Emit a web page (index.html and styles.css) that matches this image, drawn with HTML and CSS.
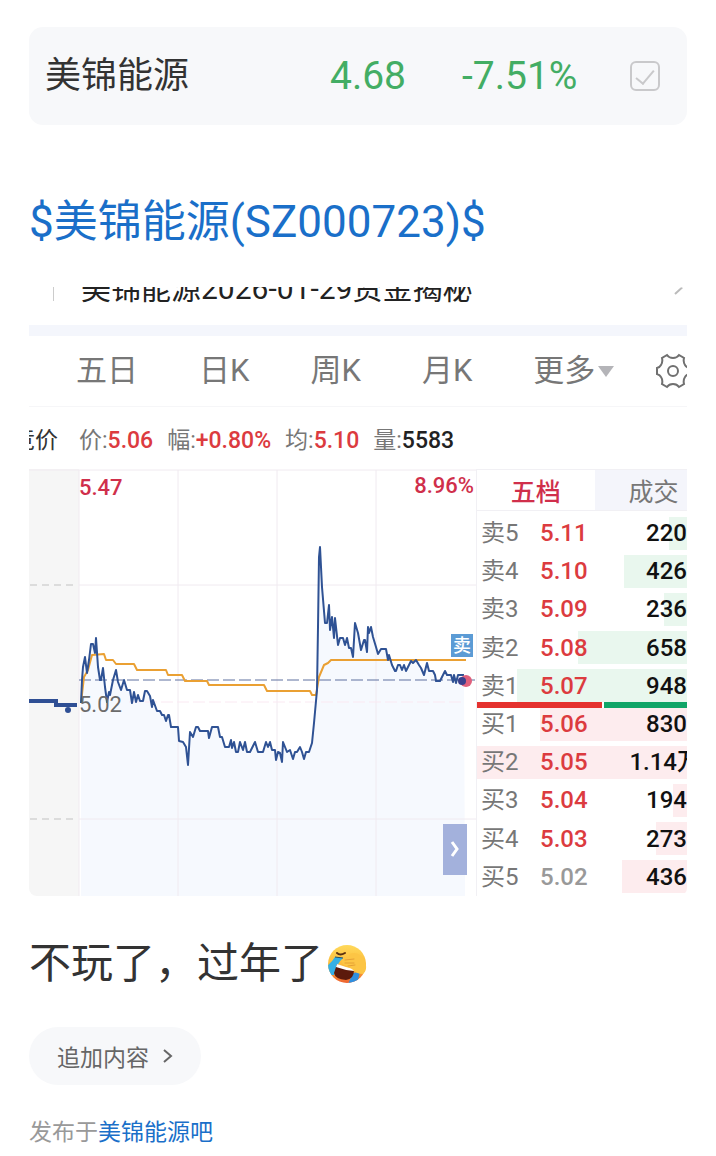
FILE: index.html
```html
<!DOCTYPE html>
<html lang="zh-CN">
<head>
    <meta charset="UTF-8">
    <meta name="viewport" content="width=device-width, initial-scale=1.0">
    <title>美锦能源吧</title>
    <link rel="stylesheet" href="styles.css">
</head>
<body>
    <header class="ticker">
        <span class="ticker-name">美锦能源</span>
        <span class="ticker-price">4.68</span>
        <span class="ticker-change">-7.51%</span>
        <input type="checkbox" class="ticker-check" aria-label="已加自选" checked>
    </header>

    <main class="post">
        <h1 class="post-title"><a href="#">$美锦能源(SZ000723)$</a></h1>

        <section class="quote">
            <div class="news">
                <span class="news-divider"></span>
                <span class="news-text">美锦能源2026-01-29资金揭秘</span>
                <svg class="news-arrow" viewBox="0 0 26 16" aria-hidden="true">
                    <path d="M1 13 L13 2 L25 13" />
                </svg>
            </div>

            <nav class="periods">
                <button type="button">五日</button>
                <button type="button">日K</button>
                <button type="button">周K</button>
                <button type="button">月K</button>
                <button type="button" class="more">更多</button>
                <button type="button" class="settings" aria-label="设置">
                    <svg viewBox="0 0 36 36" aria-hidden="true">
                        <path d="M12 2 Q14 5 18 5 Q22 5 24 2 L29 5 Q28 9 30 12 Q31 14 34 15 V21 Q31 22 30 24 Q28 27 29 31 L24 34 Q22 31 18 31 Q14 31 12 34 L7 31 Q8 27 6 24 Q5 22 2 21 V15 Q5 14 6 12 Q8 9 7 5 Z" />
                        <circle cx="18" cy="18" r="5" />
                    </svg>
                </button>
            </nav>

            <div class="stats">
                <span class="stats-mode">竞价</span>
                <span>价:<b class="up">5.06</b></span>
                <span>幅:<b class="up">+0.80%</b></span>
                <span>均:<b class="up">5.10</b></span>
                <span>量:<b>5583</b></span>
            </div>

            <div class="market">
                <div class="chart">
                    <svg viewBox="0 0 447 427" role="img" aria-label="分时走势">
                        <rect class="pre-market" width="50" height="427" />
                        <path class="area" id="area" />
                        <path class="grid" d="M0 1H447 M50 116H447 M50 350H447 M50 1V427 M149 1V427 M248 1V427 M347 1V427" />
                        <path class="grid-pre" d="M1 116H48 M1 350H48" />
                        <path class="grid-mid" d="M100 233H436" />
                        <path class="base" d="M50 211H447" />
                        <path class="pre-line" d="M0 232H27V236H48" />
                        <circle class="pre-dot" cx="39" cy="241" r="3" />
                        <polyline class="average" points="52,234 55,208 59,201 63,186 75,185 77,191 84,191 87,195 105,195 108,201 137,201 139,206 153,206 156,212 178,212 180,216 235,216 238,222 281,222 283,226 287,226 290,208 295,196 299,194 302,191 437,191" />
                        <polyline class="price" id="price" />
                        <circle class="last-halo" cx="437" cy="212" r="6" />
                        <circle class="last-dot" cx="433" cy="212" r="4" />
                        <text class="label-high" x="50" y="26">5.47</text>
                        <text class="label-high" x="445" y="24" text-anchor="end">8.96%</text>
                        <text class="label-low" x="50" y="243">5.02</text>
                        <rect class="sell-tag" x="422" y="165" width="22" height="23" />
                        <text class="sell-text" x="433" y="183" text-anchor="middle">卖</text>
                    </svg>
                    <button type="button" class="expand" aria-label="展开">
                        <svg viewBox="0 0 10 18" aria-hidden="true"><path d="M2 2 L7 9 L2 16" /></svg>
                    </button>
                </div>

                <div class="book">
                    <div class="book-tabs">
                        <button type="button" class="active">五档</button>
                        <button type="button">成交</button>
                    </div>
                    <div class="book-body">
                        <table class="orders">
                            <tbody id="orders"></tbody>
                        </table>
                        <div class="ratio"><span class="ratio-buy"></span><span class="ratio-sell"></span></div>
                    </div>
                </div>
            </div>
        </section>

        <p class="post-text">不玩了，过年了<svg class="emoji" viewBox="0 0 40 40" role="img" aria-label="笑哭捂脸">
            <defs>
                <linearGradient id="skin" x1="0" y1="0" x2="0" y2="1">
                    <stop offset="0" stop-color="#ffd95a" />
                    <stop offset="0.6" stop-color="#fbb535" />
                    <stop offset="1" stop-color="#ee6030" />
                </linearGradient>
                <clipPath id="face"><circle cx="20" cy="20" r="19" /></clipPath>
            </defs>
            <circle cx="20" cy="20" r="19" fill="url(#skin)" />
            <g clip-path="url(#face)">
                <path d="M8 13 L16 14 Q10 19 7 31 L3 31 L0 22 Q5 18 8 13 Z" fill="#35b0e6" />
                <path d="M26 29 L33 28 L30 40 L21 40 Z" fill="#2f8fe0" />
                <path d="M10 20 Q17 24 27 26 Q27 35 19 36 Q8 35 7 29 Z" fill="#5c1a0c" />
                <path d="M10 20 Q18 23 27 25 L27 27 Q17 26 9 23 Z" fill="#fff" />
            </g>
            <path d="M15 16 Q17 13 22 13 Q21 9 27 9 Q34 9 38 17 Q41 26 36 30 Q29 30 25 25 L17 21 Q14 19 15 16 Z" fill="#fcc545" />
            <path d="M18 16 L27 15 M18 19 L27 19 M21 22 L28 21" fill="none" stroke="#e5a035" stroke-width="1" stroke-linecap="round" />
            <path d="M10 9 Q13 12 18 9" fill="none" stroke="#5b3010" stroke-width="2" stroke-linecap="round" />
            <path d="M8 13 L16 14" fill="none" stroke="#244f66" stroke-width="1" />
        </svg></p>

        <button type="button" class="append">
            追加内容
            <svg viewBox="0 0 10 16" aria-hidden="true"><path d="M1 2 L8 8 L1 14" /></svg>
        </button>

        <p class="source">发布于<a href="#">美锦能源吧</a></p>
    </main>

    <script src="script.js"></script>
</body>
</html>
```

FILE: styles.css
```css
:root {
    --text-color: #333;
    --muted-color: #777;
    --link-color: #1a6fc9;
    --panel-color: #f7f8fa;
    --up-color: #dc3b3f;
    --down-color: #43ad64;
    --line-color: #f1f0f4;
    --price-color: #2f5294;
}

* {
    margin: 0;
    padding: 0;
    box-sizing: border-box;
}

body {
    padding: 27px 29px 10px;
    background: #fff;
    color: var(--text-color);
    font-family: Roboto, "Noto Sans CJK SC", sans-serif;
    overflow-x: hidden;
}

a {
    color: var(--link-color);
    text-decoration: none;
}

button {
    border: none;
    background: none;
    color: inherit;
    font: inherit;
    cursor: pointer;
}

svg {
    display: block;
}

/* ticker bar */

.ticker {
    display: grid;
    grid-template-columns: 285fr 132fr 168fr 30px;
    align-items: center;
    height: 98px;
    padding: 0 27px 0 16px;
    background: var(--panel-color);
    border-radius: 14px;
}

.ticker-name {
    font-size: 36px;
    line-height: 52px;
}

.ticker-price,
.ticker-change {
    color: var(--down-color);
    font-size: 39px;
}

.ticker-check {
    appearance: none;
    width: 30px;
    height: 30px;
    border: 2px solid #c9c9cb;
    border-radius: 6px;
}

.ticker-check:checked::before {
    content: "";
    display: block;
    width: 8px;
    height: 16px;
    margin: 3px auto 0;
    border: solid #c9c9cb;
    border-width: 0 2px 2px 0;
    transform: rotate(40deg);
}

/* post */

.post-title {
    margin: 67px 0 35px;
    font-size: 44px;
    font-weight: 400;
    line-height: 60px;
}

.quote {
    overflow: hidden;
    border-radius: 8px;
}

.news {
    display: flex;
    align-items: center;
    height: 38px;
    padding-bottom: 34px;
    color: #222;
    font-size: 30px;
    line-height: 30px;
    white-space: nowrap;
}

.news-divider {
    width: 1px;
    height: 24px;
    margin: 0 27px 0 24px;
    background: #ccc;
}

.news-text {
    flex: 1;
}

.news-arrow {
    flex: none;
    width: 26px;
    height: 16px;
    margin-right: -13px;
    fill: none;
    stroke: #bbb;
    stroke-width: 2;
}

.periods {
    display: flex;
    align-items: center;
    gap: 61px;
    height: 82px;
    padding-left: 47px;
    border-top: 11px solid #f4f6fc;
    border-bottom: 1px solid #f6f6f8;
    color: var(--muted-color);
    font-size: 31px;
    line-height: 42px;
    white-space: nowrap;
}

.periods .more {
    display: flex;
    align-items: center;
    gap: 3px;
}

.periods .more::after {
    content: "";
    border: 8px solid transparent;
    border-top: 11px solid #b4b4b8;
    border-bottom: 0;
}

.periods .settings {
    flex: none;
    width: 36px;
    margin-left: -20px;
}

.settings svg {
    fill: none;
    stroke: #707070;
    stroke-width: 2;
}

.stats {
    display: flex;
    align-items: center;
    gap: 14px;
    height: 62px;
    color: var(--muted-color);
    font-size: 23px;
    white-space: nowrap;
}

.stats b {
    color: #222;
    font-weight: 500;
}

.stats b.up {
    color: var(--up-color);
}

.stats-mode {
    margin: 0 7px 0 -17px;
    color: #333;
}

/* chart and order book */

.market {
    display: grid;
    grid-template-columns: 447fr 211fr;
}

.chart {
    position: relative;
}

.pre-market {
    fill: #f6f6f6;
}

.area {
    fill: #f6f9fe;
}

.grid,
.grid-mid,
.grid-pre {
    fill: none;
    stroke: #f0eaf0;
}

.grid-mid {
    stroke: #fae9f2;
    stroke-dasharray: 12 4;
}

.grid-pre {
    stroke: #dcdcdc;
    stroke-width: 2;
    stroke-dasharray: 7 5;
}

.base {
    stroke: #5f709f;
    stroke-width: 1;
    stroke-dasharray: 12 4;
}

.pre-line {
    fill: none;
    stroke: #2f4f94;
    stroke-width: 4;
}

.pre-dot {
    fill: #2f4f94;
}

.average,
.price {
    fill: none;
    stroke-width: 2;
    stroke-linejoin: round;
}

.average {
    stroke: #eaa033;
}

.price {
    stroke: var(--price-color);
}

.last-halo {
    fill: #e0607c;
}

.last-dot {
    fill: #3a3f8c;
}

.label-high,
.label-low {
    fill: #d02f4b;
    font-size: 22px;
    font-weight: 500;
}

.label-low {
    fill: #6b6b6b;
    font-weight: 400;
}

.sell-tag {
    fill: #5b9bd5;
}

.sell-text {
    fill: #fff;
    font-size: 18px;
    font-weight: 500;
}

.expand {
    position: absolute;
    right: 2%;
    bottom: 5%;
    display: flex;
    align-items: center;
    justify-content: center;
    width: 24px;
    height: 51px;
    background: #a3b1dc;
}

.expand svg {
    width: 10px;
    height: 18px;
    fill: none;
    stroke: #fff;
    stroke-width: 3;
}

.book {
    display: flex;
    flex-direction: column;
    overflow: hidden;
    border-left: 1px solid var(--line-color);
}

.book-tabs {
    display: flex;
    height: 42px;
    border-top: 1px solid var(--line-color);
    border-bottom: 1px solid var(--line-color);
    color: var(--muted-color);
    font-size: 25px;
}

.book-tabs button {
    flex: 0 0 56%;
    background: #f4f5fb;
}

.book-tabs .active {
    background: #fff;
    color: #d02f4b;
    font-weight: 500;
}

.book-body {
    position: relative;
    flex: 1;
    display: flex;
    padding-top: 3px;
}

.orders {
    width: 100%;
    border-collapse: collapse;
    font-size: 24px;
    line-height: 24px;
    white-space: nowrap;
}

.orders tr {
    height: 38px;
    background: linear-gradient(to left, var(--depth-color) var(--depth), transparent 0) center / 100% 33px no-repeat;
}

.orders .sell {
    --depth-color: #e9f7ee;
}

.orders .buy {
    --depth-color: #fdecee;
}

.orders th {
    width: 30%;
    padding-left: 4px;
    color: var(--muted-color);
    font-weight: 400;
    text-align: left;
}

.orders td {
    color: var(--up-color);
    font-weight: 500;
}

.orders .flat {
    color: #999;
}

.orders .volume {
    color: #111;
    text-align: right;
}

.orders .overflow {
    margin-right: -14px;
}

.ratio {
    position: absolute;
    top: 50%;
    left: 0;
    right: 0;
    display: flex;
    gap: 2px;
    height: 6px;
    margin-top: -2px;
}

.ratio-buy {
    flex: 3;
    background: #e5322f;
}

.ratio-sell {
    flex: 2;
    background: #10a567;
}

/* post footer */

.post-text {
    display: flex;
    align-items: center;
    margin-top: 38px;
    font-size: 42px;
    line-height: 60px;
}

.emoji {
    width: 40px;
    height: 40px;
    margin-left: 4px;
}

.append {
    display: flex;
    align-items: center;
    gap: 14px;
    height: 58px;
    margin-top: 33px;
    padding: 0 28px;
    background: var(--panel-color);
    border-radius: 29px;
    color: #666;
    font-size: 23px;
}

.append svg {
    width: 10px;
    height: 16px;
    fill: none;
    stroke: #666;
    stroke-width: 2;
}

.source {
    margin-top: 32px;
    color: #999;
    font-size: 23px;
    line-height: 32px;
}
```

FILE: script.js
```js
const prices = [
    [52, 234], [53, 211], [54, 198], [56, 188], [58, 204], [60, 191], [62, 175], [64, 175],
    [66, 184], [67, 169], [69, 198], [71, 211], [72, 211], [74, 199], [76, 218], [78, 233],
    [80, 223], [81, 226], [84, 211], [87, 201], [89, 213], [92, 221], [95, 211], [98, 221],
    [101, 221], [103, 234], [105, 223], [107, 233], [109, 226], [111, 232], [114, 232], [116, 222],
    [118, 222], [121, 227], [123, 238], [124, 231], [128, 242], [131, 242], [133, 246], [135, 246],
    [137, 252], [139, 246], [140, 246], [142, 258], [149, 258], [150, 272], [154, 273], [157, 278],
    [159, 296], [161, 263], [164, 268], [167, 258], [169, 258], [171, 262], [179, 262], [180, 269],
    [183, 258], [189, 258], [191, 268], [193, 268], [196, 278], [200, 278], [202, 271], [203, 279],
    [205, 273], [207, 283], [209, 283], [211, 273], [214, 281], [216, 273], [218, 283], [221, 283],
    [226, 273], [229, 283], [234, 283], [237, 273], [239, 278], [241, 273], [243, 281], [246, 281],
    [247, 291], [249, 283], [251, 284], [253, 293], [254, 273], [256, 278], [258, 283], [261, 281],
    [264, 290], [266, 283], [268, 283], [271, 278], [273, 283], [275, 290], [277, 283], [280, 283],
    [283, 274], [285, 254], [288, 221], [289, 158], [290, 88], [291, 78], [293, 118], [296, 154],
    [298, 154], [300, 136], [301, 161], [303, 148], [305, 169], [306, 149], [309, 176], [311, 169],
    [314, 169], [316, 176], [318, 169], [320, 179], [322, 179], [324, 188], [326, 154], [329, 164],
    [332, 181], [335, 171], [336, 171], [338, 183], [339, 158], [340, 164], [342, 158], [344, 168],
    [347, 178], [349, 185], [352, 180], [357, 180], [359, 191], [360, 186], [363, 196], [366, 202],
    [367, 202], [369, 196], [371, 196], [373, 201], [375, 196], [377, 202], [380, 196], [382, 192],
    [384, 194], [387, 191], [390, 196], [392, 199], [395, 206], [398, 194], [400, 202], [404, 202],
    [406, 206], [407, 212], [411, 212], [414, 206], [416, 202], [418, 206], [422, 206], [424, 213],
    [425, 206], [427, 214], [429, 206], [435, 206]
];

const points = prices.map(p => p.join(',')).join(' ');
document.getElementById('price').setAttribute('points', points);
document.getElementById('area').setAttribute('d', `M52,427 L${points} L436,427 Z`);

const orders = [
    { side: 'sell', label: '卖5', price: '5.11', volume: '220', depth: 9 },
    { side: 'sell', label: '卖4', price: '5.10', volume: '426', depth: 30 },
    { side: 'sell', label: '卖3', price: '5.09', volume: '236', depth: 11 },
    { side: 'sell', label: '卖2', price: '5.08', volume: '658', depth: 52 },
    { side: 'sell', label: '卖1', price: '5.07', volume: '948', depth: 81 },
    { side: 'buy', label: '买1', price: '5.06', volume: '830', depth: 70 },
    { side: 'buy', label: '买2', price: '5.05', volume: '1.14万', depth: 100 },
    { side: 'buy', label: '买3', price: '5.04', volume: '194', depth: 7 },
    { side: 'buy', label: '买4', price: '5.03', volume: '273', depth: 15 },
    { side: 'buy', label: '买5', price: '5.02', volume: '436', depth: 31 }
];

document.getElementById('orders').innerHTML = orders.map(o => `
    <tr class="${o.side}" style="--depth: ${o.depth}%">
        <th scope="row">${o.label}</th>
        <td class="${o.price === '5.02' ? 'flat' : ''}">${o.price}</td>
        <td class="volume"><span class="${o.volume.includes('万') ? 'overflow' : ''}">${o.volume}</span></td>
    </tr>`).join('');
```
